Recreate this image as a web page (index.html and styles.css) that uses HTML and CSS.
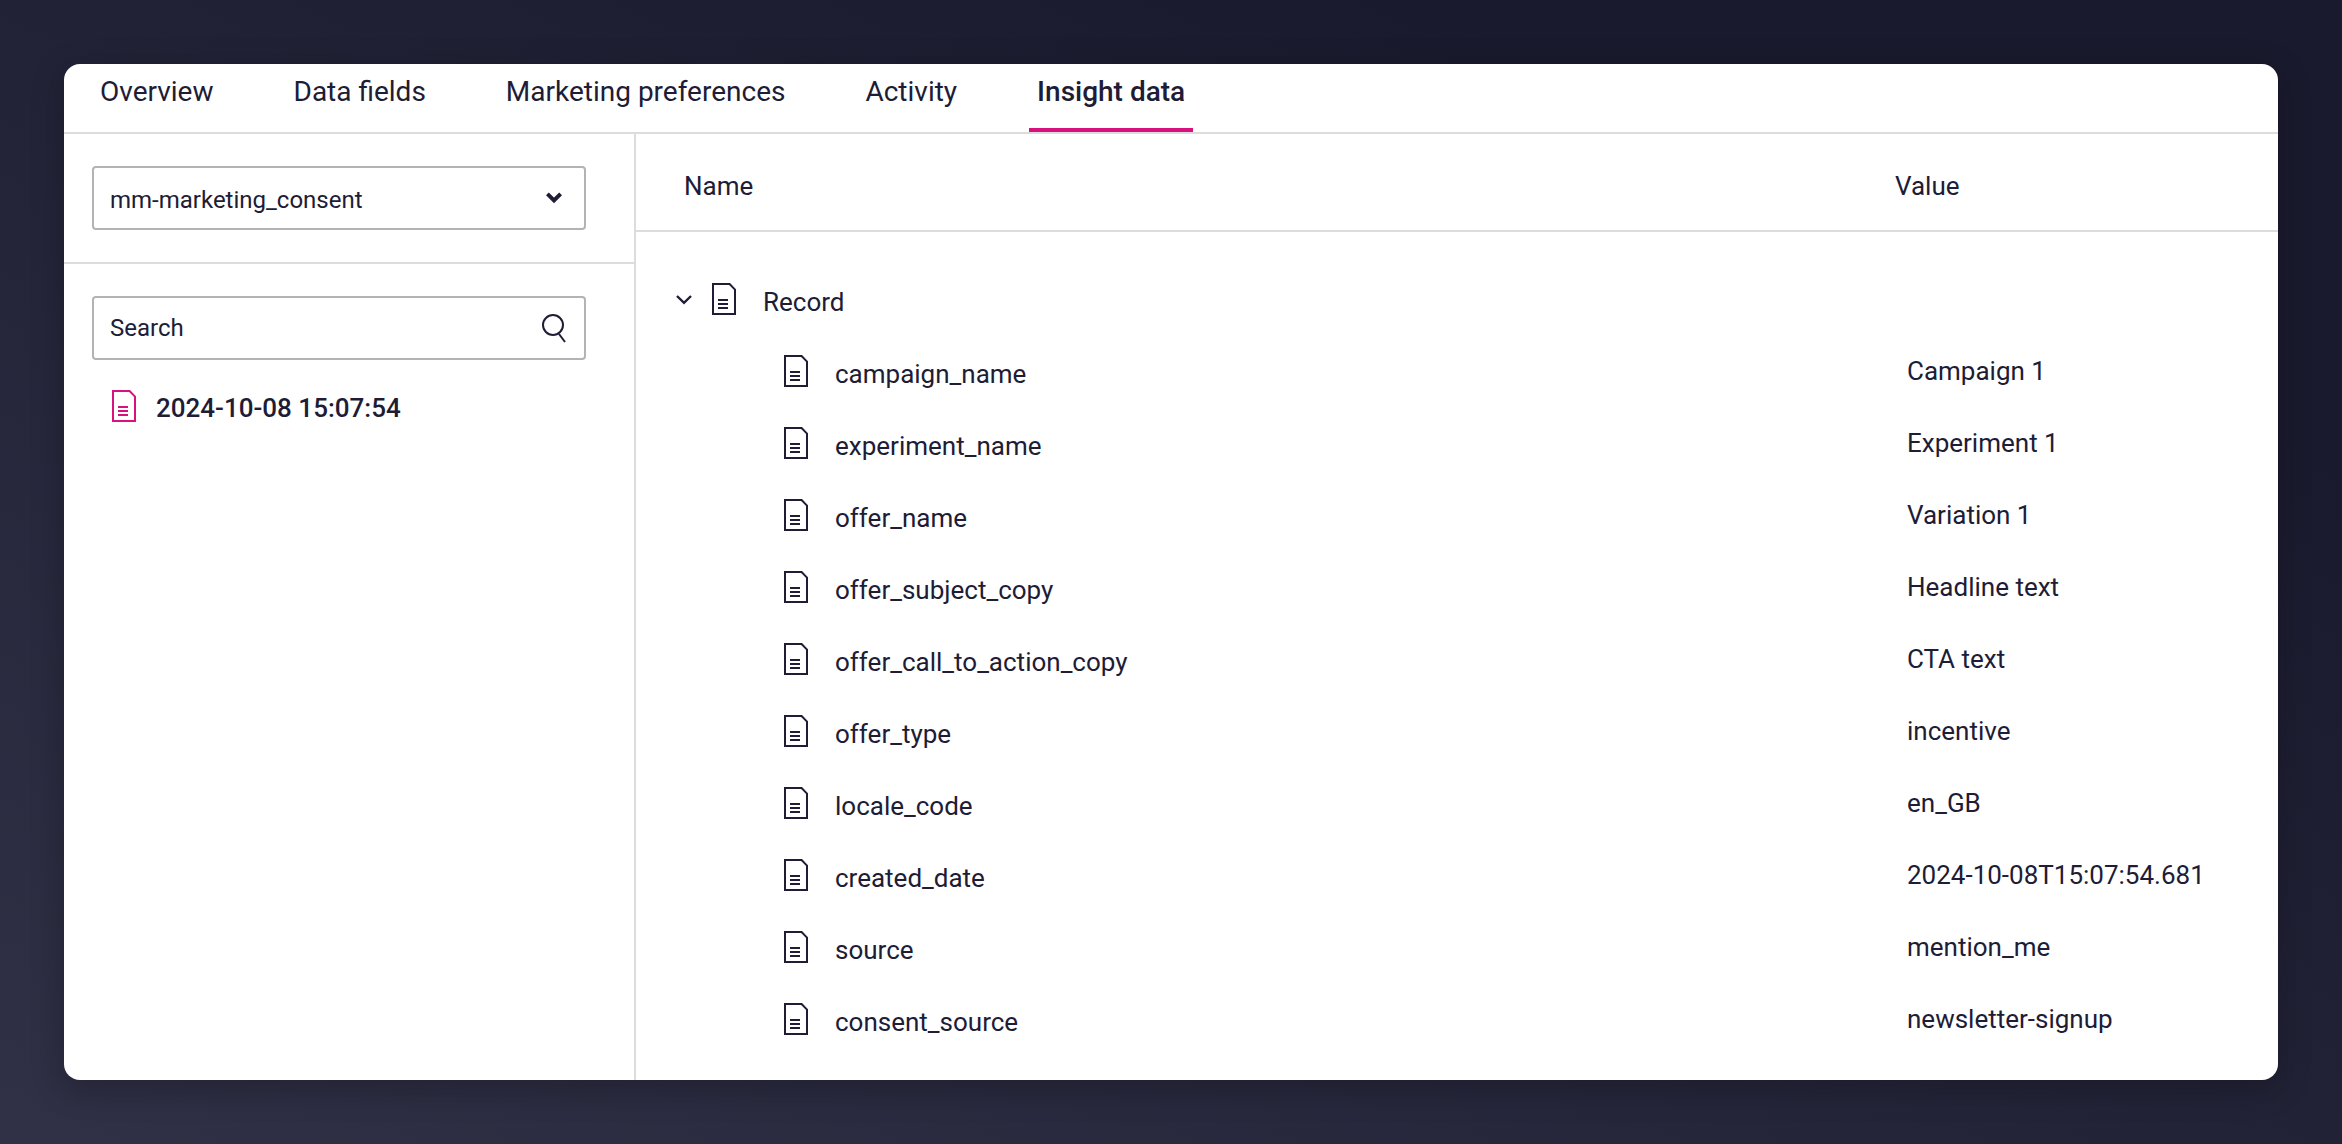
FILE: index.html
```html
<!DOCTYPE html>
<html lang="en">
<head>
  <meta charset="UTF-8">
  <title>Insight data</title>
  <link rel="stylesheet" href="styles.css">
</head>
<body>

  <!-- shared icons -->
  <svg class="sprite" width="0" height="0">
    <symbol id="doc" viewBox="0 0 24 32">
      <path d="M1 1H17.6L23 6.6V31H1Z" fill="none" stroke="currentColor" stroke-width="2"/>
      <path d="M6 17H16M6 21H16M6 25H16" fill="none" stroke="currentColor" stroke-width="2"/>
    </symbol>
  </svg>

  <div class="card">
    <nav class="tabs">
      <a class="tab">Overview</a>
      <a class="tab">Data fields</a>
      <a class="tab">Marketing preferences</a>
      <a class="tab">Activity</a>
      <a class="tab active">Insight data</a>
    </nav>

    <div class="main">
      <aside class="sidebar">
        <div class="collection">
          <div class="field select">
            <span>mm-marketing_consent</span>
            <svg class="arrow" width="16" height="12" viewBox="0 0 16 12">
              <path d="M1.4 1.9L8 8.5L14.6 1.9" fill="none" stroke="currentColor" stroke-width="4"/>
            </svg>
          </div>
        </div>

        <div class="records">
          <div class="field search">
            <span>Search</span>
            <svg class="magnifier" width="24" height="29" viewBox="0 0 24 29">
              <circle cx="11" cy="11" r="10" fill="none" stroke="currentColor" stroke-width="2"/>
              <path d="M17 20L23 28" fill="none" stroke="currentColor" stroke-width="2"/>
            </svg>
          </div>
          <div class="record-item">
            <svg class="doc" width="24" height="32"><use href="#doc"/></svg>
            <span>2024-10-08 15:07:54</span>
          </div>
        </div>
      </aside>

      <section class="content">
        <div class="table-head">
          <div class="col-name">Name</div>
          <div class="col-value">Value</div>
        </div>

        <div class="tree" id="tree">
          <div class="row root">
            <div class="name">
              <svg class="chevron" width="16" height="10" viewBox="0 0 16 10">
                <path d="M1 1L8 7.8L15 1" fill="none" stroke="currentColor" stroke-width="2.4"/>
              </svg>
              <svg class="doc" width="24" height="32"><use href="#doc"/></svg>
              <span>Record</span>
            </div>
          </div>
        </div>
      </section>
    </div>
  </div>

  <script>
    const fields = [
      { name: "campaign_name", value: "Campaign 1" },
      { name: "experiment_name", value: "Experiment 1" },
      { name: "offer_name", value: "Variation 1" },
      { name: "offer_subject_copy", value: "Headline text" },
      { name: "offer_call_to_action_copy", value: "CTA text" },
      { name: "offer_type", value: "incentive" },
      { name: "locale_code", value: "en_GB" },
      { name: "created_date", value: "2024-10-08T15:07:54.681" },
      { name: "source", value: "mention_me" },
      { name: "consent_source", value: "newsletter-signup" }
    ];

    const tree = document.getElementById("tree");

    fields.forEach(field => {
      const row = document.createElement("div");
      row.className = "row";
      row.innerHTML = `
        <div class="name">
          <svg class="doc" width="24" height="32"><use href="#doc"/></svg>
          <span>${field.name}</span>
        </div>
        <div class="value">${field.value}</div>
      `;
      tree.appendChild(row);
    });
  </script>
</body>
</html>
```
FILE: styles.css
```css
* {
  box-sizing: border-box;
}

body {
  margin: 0;
  height: 1144px;
  padding: 64px;
  overflow: hidden;
  font-family: Roboto, Arial, sans-serif;
  font-size: 26px;
  color: #201c35;
  background: linear-gradient(to top right, #303046, #1a1a2e 80%);
}

.sprite {
  position: absolute;
}

svg {
  display: block;
  flex: none;
}

.card {
  display: flex;
  flex-direction: column;
  height: 1016px;
  background: #fff;
  border-radius: 16px;
  overflow: hidden;
  box-shadow: 0 8px 32px rgba(0, 0, 0, 0.25);
}

.tabs {
  display: flex;
  gap: 64px;
  height: 70px;
  padding-left: 28px;
  border-bottom: 2px solid #dcdcdc;
}

.tab {
  height: 68px;
  padding: 0 8px;
  font-size: 28px;
  line-height: 56px;
}

.tab.active {
  font-weight: 500;
  border-bottom: 4px solid #d7127e;
}

.main {
  display: flex;
  flex: 1;
}

.sidebar {
  width: 572px;
  border-right: 2px solid #dcdcdc;
}

.collection {
  height: 130px;
  padding: 32px 48px 32px 28px;
  border-bottom: 2px solid #dcdcdc;
}

.records {
  padding: 32px 48px 0 28px;
}

.field {
  display: flex;
  align-items: center;
  justify-content: space-between;
  height: 64px;
  padding: 0 18px 0 16px;
  border: 2px solid #b3b3b3;
  border-radius: 4px;
  font-size: 24px;
}

.select {
  padding-right: 22px;
}

.select span {
  padding-top: 4px;
}

.record-item {
  display: flex;
  gap: 20px;
  margin-top: 30px;
  padding-left: 20px;
  font-weight: 500;
  line-height: 36px;
}

.record-item .doc {
  color: #d7127e;
}

.content {
  flex: 1;
}

.table-head {
  display: flex;
  height: 98px;
  padding-left: 48px;
  line-height: 104px;
  border-bottom: 2px solid #dcdcdc;
}

.col-name {
  width: 1211px;
}

.tree {
  padding-top: 51px;
}

.row {
  display: flex;
  height: 72px;
  padding-left: 148px;
}

.row.root {
  padding-left: 40px;
}

.name {
  display: flex;
  gap: 27px;
  width: 1123px;
  line-height: 38px;
}

.root .name {
  width: auto;
}

.chevron {
  margin: 12px -7px 0 0;
}

.value {
  line-height: 32px;
}
```
